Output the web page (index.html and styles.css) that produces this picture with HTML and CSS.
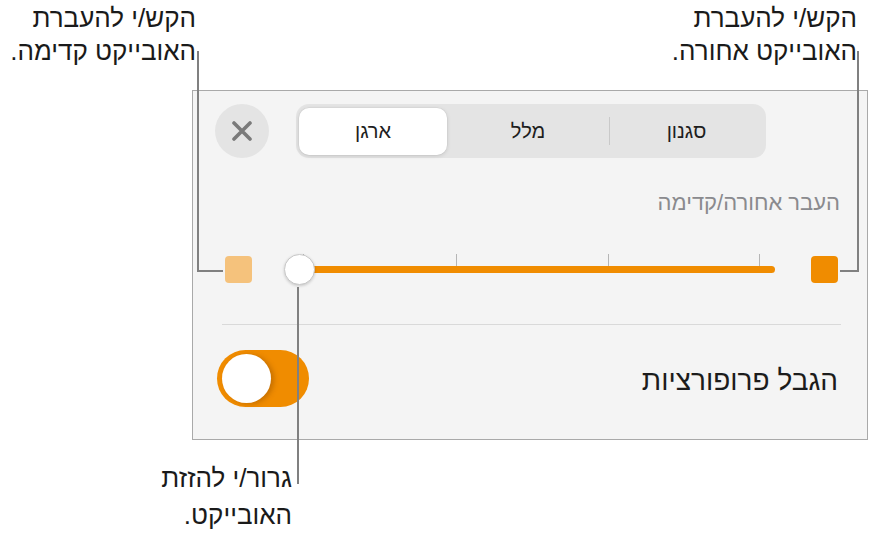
FILE: index.html
```html
<!DOCTYPE html>
<html lang="he">
<head>
<meta charset="utf-8">
<title>ארגן</title>
<link rel="stylesheet" href="styles.css">
</head>
<body>
<div class="stage">
  <div class="panel">
    <div class="header">
      <button class="close" aria-label="סגור">
        <svg width="20" height="20" viewBox="0 0 20 20"><path d="M2 2 L18 18 M18 2 L2 18" stroke="#7a7a7a" stroke-width="3.6" stroke-linecap="round"/></svg>
      </button>
      <div class="segmented">
        <div class="seg active" dir="rtl">ארגן</div>
        <div class="seg mid" dir="rtl">מלל</div>
        <div class="sep"></div>
        <div class="seg last" dir="rtl">סגנון</div>
      </div>
    </div>
    <div class="label" dir="rtl">העבר אחורה/קדימה</div>
    <div class="slider-row">
      <div class="swatch light"></div>
      <div class="slider">
        <div class="track"></div>
        <span class="tick t1"></span>
        <span class="tick t2"></span>
        <span class="tick t3"></span>
        <span class="tick t4"></span>
        <span class="knob"></span>
      </div>
      <div class="swatch dark"></div>
    </div>
    <div class="divider"></div>
    <div class="toggle-row">
      <div class="toggle"><span class="toggle-knob"></span></div>
      <div class="toggle-label" dir="rtl">הגבל פרופורציות</div>
    </div>
  </div>

  <div class="note note-tl" dir="rtl">הקש/י להעברת<br>האובייקט קדימה.</div>
  <div class="note note-tr" dir="rtl">הקש/י להעברת<br>האובייקט אחורה.</div>
  <div class="note note-b" dir="rtl">גרור/י להזזת<br>האובייקט.</div>

  <div class="leader leader-l"></div>
  <div class="leader leader-r"></div>
  <div class="leader leader-b"></div>
</div>
</body>
</html>
```
FILE: styles.css
```css
* { box-sizing: border-box; }
html, body { margin: 0; padding: 0; background: #ffffff; }
body {
  font-family: "Liberation Sans", "DejaVu Sans", sans-serif;
  color: #1c1c1c;
  width: 870px;
  height: 545px;
  overflow: hidden;
}
.stage {
  position: relative;
  width: 870px;
  height: 545px;
  padding: 90px 0 0 192px;
}
.panel {
  width: 676px;
  height: 350px;
  border: 1px solid #a9a9a9;
  background: #f4f4f4;
  padding-top: 13px;
}
.header {
  display: flex;
  align-items: center;
  padding-left: 22px;
  gap: 27px;
}
.close {
  width: 54px;
  height: 54px;
  border-radius: 50%;
  border: none;
  background: #e4e4e4;
  padding: 0;
  display: flex;
  align-items: center;
  justify-content: center;
}
.segmented {
  width: 470px;
  height: 54px;
  border-radius: 13px;
  background: #e4e4e4;
  padding: 4px 3px 3px 3px;
  display: flex;
  align-items: stretch;
}
.seg {
  display: flex;
  align-items: center;
  justify-content: center;
  font-size: 20px;
  color: #1e1e1e;
}
.seg.active {
  width: 148px;
  background: #ffffff;
  border-radius: 10px;
  box-shadow: 0 1px 4px rgba(0,0,0,0.13), 0 0 0 0.5px rgba(0,0,0,0.05);
}
.seg.mid { width: 162px; }
.sep {
  width: 1px;
  background: #c9c9c9;
  margin: 9px 0 10px;
}
.seg.last { flex: 1; }
.label {
  margin-top: 34px;
  padding-right: 27px;
  text-align: right;
  font-size: 22px;
  line-height: 22px;
  color: #8a8a8e;
}
.slider-row {
  display: flex;
  align-items: center;
  margin-top: 39px;
  padding-left: 32px;
}
.swatch {
  width: 27px;
  height: 27px;
  border-radius: 4px;
}
.swatch.light { background: #f5c27c; }
.swatch.dark { background: #f08c00; margin-left: 36px; }
.slider {
  position: relative;
  width: 491px;
  height: 32px;
  margin-left: 32px;
  display: flex;
  align-items: center;
}
.track {
  margin-left: 15px;
  width: 476px;
  height: 7px;
  border-radius: 4px;
  background: #f08c00;
  margin-top: 1px;
}
.tick {
  position: absolute;
  top: 1px;
  width: 1px;
  height: 12px;
  background: #b5b5b5;
}
.t1 { left: 19px; }
.t2 { left: 172px; }
.t3 { left: 324px; }
.t4 { left: 475px; }
.knob {
  position: absolute;
  left: 0;
  top: 1px;
  width: 31px;
  height: 31px;
  border-radius: 50%;
  background: #ffffff;
  border: 1px solid #c8c8c8;
  box-shadow: 0 1px 3px rgba(0,0,0,0.18);
}
.divider {
  margin: 39px 0 0 29px;
  width: 619px;
  height: 1px;
  background: #d9d9d9;
}
.toggle-row {
  display: flex;
  align-items: center;
  justify-content: space-between;
  margin-top: 25px;
  padding: 0 29px 0 24px;
}
.toggle {
  width: 92px;
  height: 57px;
  border-radius: 29px;
  background: #f08c00;
  padding: 4px 5px;
}
.toggle-knob {
  display: block;
  width: 49px;
  height: 49px;
  border-radius: 50%;
  background: #ffffff;
  box-shadow: 3px 1px 5px rgba(120,60,0,0.35);
}
.toggle-label {
  font-size: 28px;
  color: #1c1c1c;
  margin-top: 4px;
}
.note {
  position: absolute;
  font-size: 26px;
  line-height: 33px;
  color: #1a1a1a;
  text-align: right;
  white-space: nowrap;
}
.note-tl { right: 674px; top: 2px; }
.note-tr { right: 13px; top: 2px; }
.note-b { right: 578px; top: 460px; line-height: 37px; }
.leader {
  position: absolute;
  border-color: #808080;
  border-style: solid;
  border-width: 0;
}
.leader-l {
  left: 197px;
  top: 51px;
  width: 26px;
  height: 221px;
  border-left-width: 2px;
  border-bottom-width: 2px;
}
.leader-r {
  left: 840px;
  top: 51px;
  width: 19px;
  height: 221px;
  border-right-width: 2px;
  border-bottom-width: 2px;
}
.leader-b {
  left: 297px;
  top: 287px;
  width: 2px;
  height: 197px;
  background: #808080;
}
```
